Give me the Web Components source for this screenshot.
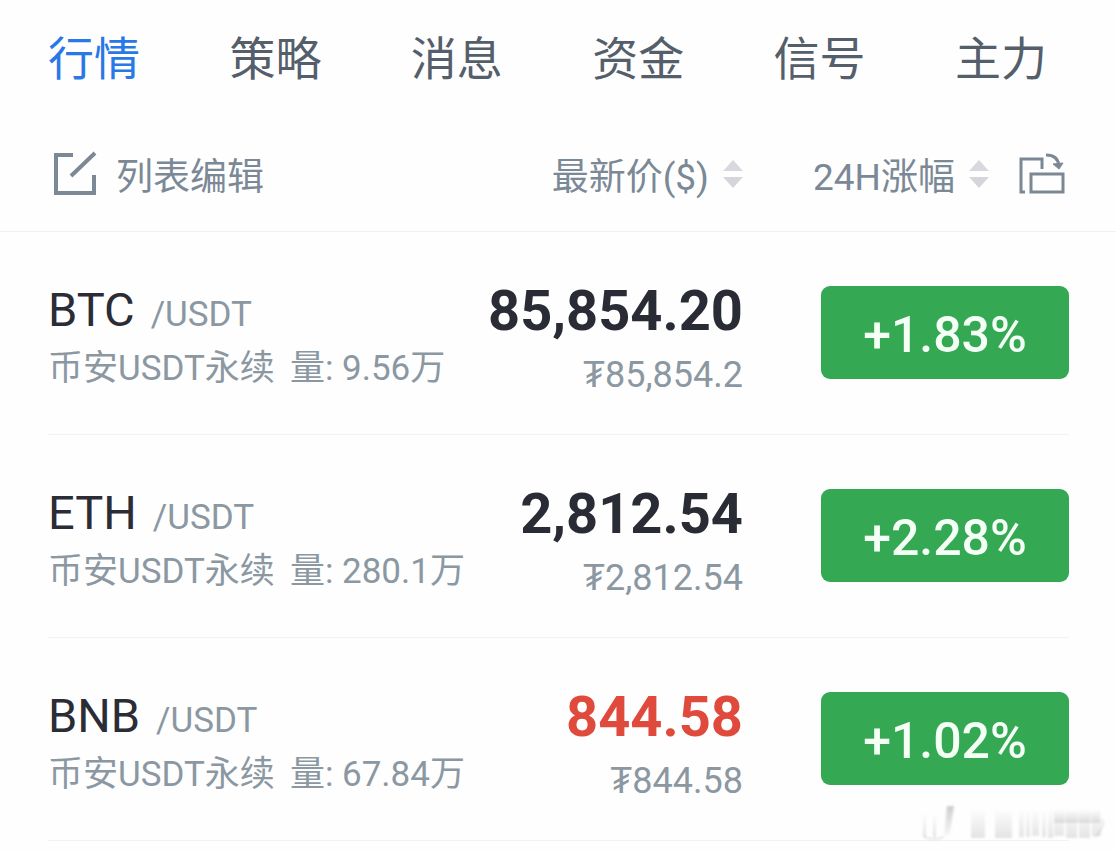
<!DOCTYPE html>
<html lang="zh-CN">
<head>
<meta charset="utf-8">
<meta name="viewport" content="width=device-width, initial-scale=1">
<title>行情</title>
<style>
  body { margin: 0; background: #fefefe; font-family: Roboto, "Noto Sans CJK SC", sans-serif; }
</style>
</head>
<body>
<market-page>
  <market-tabs slot="tabs"></market-tabs>
  <quote-table></quote-table>
</market-page>

<template id="t-page">
  <style>
    :host { display: block; position: relative; min-height: 851px; box-sizing: border-box; overflow: hidden; }
    page-mark { position: absolute; right: 0; bottom: 0; }
  </style>
  <slot name="tabs"></slot>
  <main><slot></slot></main>
  <page-mark></page-mark>
</template>

<template id="t-tabs">
  <style>
    :host { display: block; }
    nav { display: flex; justify-content: space-between; padding: 25px 69px 24px 48px; }
    a { font-size: 46px; line-height: 68px; color: #555f6b; text-decoration: none; white-space: nowrap; }
    a[aria-current] { color: #2878e6; }
  </style>
  <nav>
    <a href="#quotes" aria-current="page">行情</a>
    <a href="#strategy">策略</a>
    <a href="#news">消息</a>
    <a href="#funds">资金</a>
    <a href="#signal">信号</a>
    <a href="#main">主力</a>
  </nav>
</template>

<template id="t-sort">
  <style>
    :host { display: block; }
    button { display: flex; align-items: center; gap: 13px; margin: 0; padding: 0; border: 0; background: none;
      font: inherit; color: inherit; white-space: nowrap; cursor: pointer; }
    span { padding-top: 8px; }
    svg { display: block; }
  </style>
  <button type="button"><span><slot></slot></span>
    <svg width="22" height="30" viewBox="0 0 22 30" aria-hidden="true">
      <path d="M11 1 21 12H1z" fill="#d9d8e0"/><path d="M11 29 21 18H1z" fill="#d6d6da"/>
    </svg>
  </button>
</template>

<template id="t-badge">
  <style>
    :host { display: flex; align-items: center; justify-content: center; box-sizing: border-box; width: 248px; height: 93px;
      padding-top: 4px; border-radius: 9px; background: #34a853; color: #f4fff6; font-size: 50px; line-height: 60px; font-weight: 500; }
  </style>
  <slot></slot>
</template>

<template id="t-mark">
  <style>:host { display: block; pointer-events: none; } svg { display: block; }</style>
  <svg width="200" height="52" viewBox="0 0 200 52" aria-hidden="true">
    <defs>
      <linearGradient id="fade" x1="0" y1="0" x2="0" y2="1">
        <stop offset="0" stop-color="#999" stop-opacity="0"/><stop offset="1" stop-color="#999" stop-opacity=".26"/>
      </linearGradient>
      <linearGradient id="fall" x1="0" y1="0" x2="0" y2="1">
        <stop offset="0" stop-color="#888" stop-opacity=".42"/><stop offset="1" stop-color="#999" stop-opacity=".08"/>
      </linearGradient>
      <filter id="soft"><feGaussianBlur stdDeviation="1"/></filter>
    </defs>
    <g filter="url(#soft)">
      <path d="M7 14h3v24H7zM17 14h3v24h-3z" fill="url(#fade)"/>
      <path d="M31 7h7l-4 27-6 3z" fill="url(#fall)"/>
      <path d="M8 38q10 4 20 0" fill="none" stroke="#999" stroke-opacity=".45"/>
      <path d="M55 10h14v29H55zM79 10h8v29h-8zM87 13h9v26h-9zM103 12h5v26h-5zM110 12h4v26h-4zM116 12h7v25h-7zM126 12h4v26h-4zM132 12h5v27h-5zM138 12h10v25h-10zM150 12h11v27h-11zM163 12h11v27h-11zM176 12h9v25h-9z" fill="url(#fade)"/>
      <path d="M138 11h46v13h-46z" fill="url(#fade)"/>
      <path d="M186 20l1 6q-3 8-8 12" fill="none" stroke="#999" stroke-opacity=".22" stroke-width="2"/>
    </g>
  </svg>
</template>

<template id="t-table">
  <style>
    :host { display: block; }
    table, thead, tbody { display: block; }
    tr { display: grid; grid-template-columns: 1fr auto 326px; }
    th, td { display: block; padding: 0; text-align: left; font-weight: 400; white-space: nowrap; }
    thead tr { align-items: center; padding: 0 46px 0 48px; height: 114px; border-bottom: 1px solid #f0f1f3;
      font-size: 37px; line-height: 54px; color: #7b8996; }
    thead th:last-child { display: flex; align-items: center; justify-content: space-between; padding: 0 5px 0 69px; }
    button { display: flex; align-items: center; gap: 18px; margin: 0; padding: 0 0 0 5px; border: 0; background: none;
      font: inherit; color: inherit; cursor: pointer; }
    button span { padding-top: 8px; }
    svg { display: block; fill: none; stroke: currentColor; }
    tbody tr { margin: 0 47px 0 48px; height: 202px; border-bottom: 1px solid #f1f2f4; }
    .pair { display: flex; align-items: baseline; gap: 16px; padding-top: 49px; line-height: 58px; font-size: 47px; color: #2b2c35; }
    .pair small { font-size: 35px; color: #8b98a2; }
    .info { display: flex; gap: 15px; font-size: 35px; line-height: 50px; color: #8b98a2; }
    .price { padding-top: 45px; text-align: right; }
    .price strong { display: block; font-size: 56px; line-height: 68px; font-weight: 700; color: #2a2c35; }
    .price .down { color: #e04a3c; }
    .price span { display: block; font-size: 36px; line-height: 60px; color: #8b98a2; }
    .change { display: flex; justify-content: flex-end; padding-top: 54px; }
  </style>
  <table>
    <thead>
      <tr>
        <th scope="col"><button type="button">
          <svg width="45" height="46" viewBox="0 0 45 46" stroke-width="4" aria-hidden="true"><path d="M20 4H3v38h38V24M18 25 42 2"/></svg>
          <span>列表编辑</span></button></th>
        <th scope="col"><sort-button>最新价($)</sort-button></th>
        <th scope="col"><sort-button>24H涨幅</sort-button>
          <button type="button" aria-label="横屏">
            <svg width="46" height="44" viewBox="0 0 46 44" stroke-width="3" aria-hidden="true"><path d="M6 40H2V7H23V17M12 22H44V40H12z"/><path d="M27 3Q39 3 40 14"/><path d="M34 12 40 17 44 11z" fill="currentColor" stroke-width="1"/></svg>
          </button></th>
      </tr>
    </thead>
    <tbody></tbody>
  </table>
</template>

<script>
  const define = (name, id, setup) => customElements.define(name, class extends HTMLElement {
    constructor() {
      super();
      const root = this.attachShadow({ mode: 'open' });
      root.append(document.getElementById(id).content.cloneNode(true));
      if (setup) setup(root);
    }
  });

  const quotes = [
    { coin: 'BTC', volume: '9.56万', price: '85,854.20', usdt: '85,854.2', change: '+1.83%' },
    { coin: 'ETH', volume: '280.1万', price: '2,812.54', usdt: '2,812.54', change: '+2.28%' },
    { coin: 'BNB', volume: '67.84万', price: '844.58', usdt: '844.58', change: '+1.02%', down: true }
  ];

  define('sort-button', 't-sort');
  define('change-badge', 't-badge');
  define('page-mark', 't-mark');
  define('market-tabs', 't-tabs');
  define('quote-table', 't-table', root => {
    root.querySelector('tbody').innerHTML = quotes.map(q => `
      <tr>
        <td><div class="pair"><span>${q.coin}</span><small>/USDT</small></div>
          <div class="info"><span>币安USDT永续</span><span>量: ${q.volume}</span></div></td>
        <td class="price"><strong class="${q.down ? 'down' : ''}">${q.price}</strong><span>₮${q.usdt}</span></td>
        <td class="change"><change-badge>${q.change}</change-badge></td>
      </tr>`).join('');
  });
  define('market-page', 't-page');
</script>
</body>
</html>
